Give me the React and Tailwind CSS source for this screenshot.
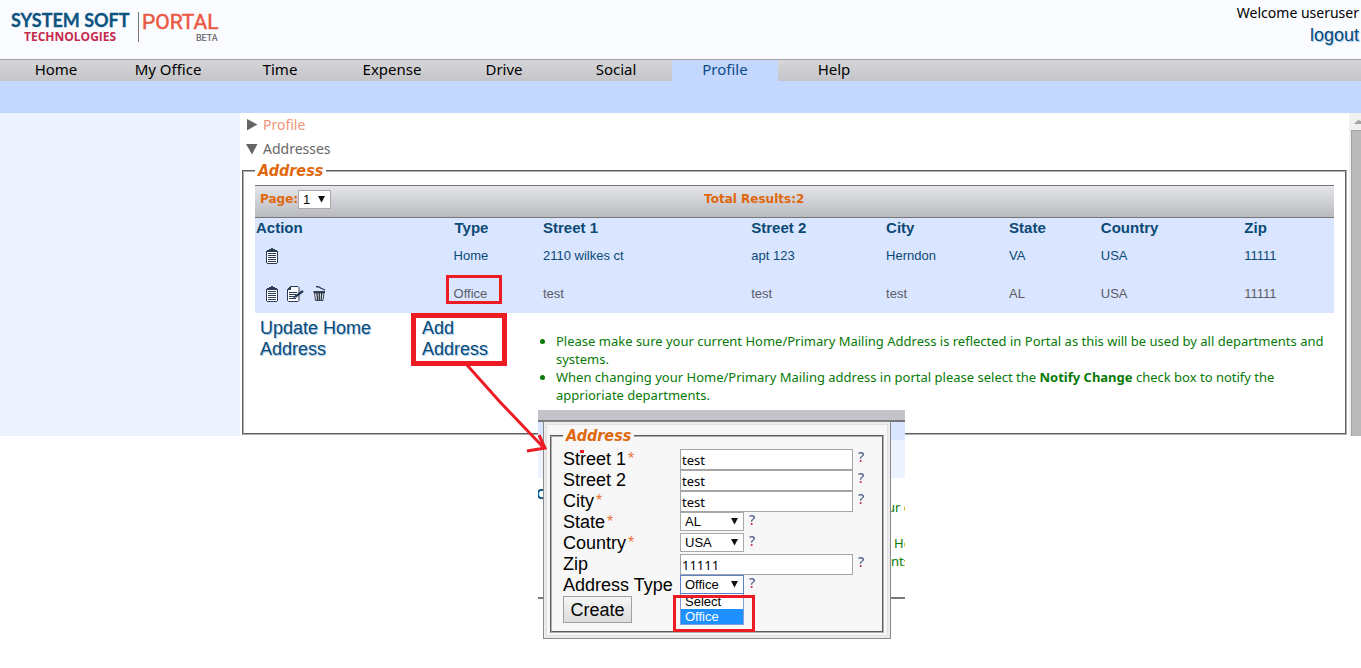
import React from "react";

const navItems = ["Home", "My Office", "Time", "Expense", "Drive", "Social", "Profile", "Help"];

const rows = [
  { type: "Home", street1: "2110 wilkes ct", street2: "apt 123", city: "Herndon", state: "VA", editable: false },
  { type: "Office", street1: "test", street2: "test", city: "test", state: "AL", editable: true },
];

function Logo() {
  return (
    <svg width="222" height="48" viewBox="0 0 222 48" role="img" aria-label="System Soft Technologies Portal Beta">
      <text x="11" y="27" fontSize="18" fontWeight="700" fill="#0b5380" stroke="#0b5380" strokeWidth="0.3" className="font-[Lato]">SYSTEM SOFT</text>
      <text x="24" y="41" fontSize="12" fontWeight="700" fill="#c62a4c" className="font-['Open_Sans']">TECHNOLOGIES</text>
      <rect x="138" y="12" width="1" height="30" fill="#777" />
      <text x="142" y="29" fontSize="21" fill="#ea5743" stroke="#ea5743" strokeWidth="0.5" className="font-[Roboto]">PORTAL</text>
      <text x="196" y="41" fontSize="9" fill="#666" stroke="#666" strokeWidth="0.2" className="font-[Roboto]">BETA</text>
    </svg>
  );
}

function ClipboardIcon() {
  return (
    <svg width="12" height="16" viewBox="0 0 12 16" shapeRendering="crispEdges">
      <path d="M1 2h10v1h1v12h-1v1H1v-1H0V3h1z" fill="#2b3a55" />
      <path d="M1 4h10v11H1z" fill="#fff" />
      <path d="M5 0h2v1h2v1h1v2H2V2h1V1h2z" fill="#2b3a55" />
      <path d="M2 5h8v1H2zM2 7h8v1H2zM2 9h8v1H2zM2 11h8v1H2zM2 13h8v1H2z" fill="#2b3a55" />
    </svg>
  );
}

function EditIcon() {
  return (
    <svg width="17" height="16" viewBox="0 0 17 16">
      <path d="M3.5 .5h7.500l1 1v13l-1 1h-9.500l-1-1v-11z" fill="#fff" stroke="#2b3a55" />
      <path d="M0 4L4 0v4z" fill="#2b3a55" />
      <path d="M2 6.500h8M2 8.500h7M2 10.500h6M2 12.500h7" fill="none" stroke="#2b3a55" />
      <path d="M16 5L8.500 10.500" stroke="#2b3a55" strokeWidth="2.400" />
      <path d="M8.500 9l-2.500 3 3.500-.8z" fill="#2b3a55" />
    </svg>
  );
}

function TrashIcon() {
  return (
    <svg width="13" height="17" viewBox="0 0 13 17">
      <path d="M3 1.500l3.500.5 1 1L12 5" fill="none" stroke="#2b3a55" strokeWidth="1.300" />
      <path d="M.5 6h11.500v2H.5z" fill="#333c50" />
      <path d="M1.500 8h9.500l-1 7.500H2.500z" fill="#e9edf7" stroke="#39445c" />
      <path d="M4 8l.5 7M6.300 8v7M8.700 8l-.5 7" stroke="#2b3040" strokeWidth="1.300" />
    </svg>
  );
}

function Caret() {
  return (
    <svg width="7" height="7" viewBox="0 0 7 7" className="pointer-events-none absolute right-[6px] top-[6px]">
      <path d="M0 0h7L3.500 6.500z" fill="#111" />
    </svg>
  );
}

function Select({ id, options, width, focused }) {
  return (
    <span className={"relative block " + width}>
      <select
        id={id}
        className={
          "block h-[19px] w-full appearance-none border bg-white pl-1 font-['Liberation_Sans',sans-serif] text-[13px] leading-4 font-normal text-black outline-none " +
          (focused ? "border-[#5b82c9]" : "border-[#a9a9a9]")
        }
      >
        {options.map((o) => (
          <option key={o}>{o}</option>
        ))}
      </select>
      <Caret />
    </span>
  );
}

function Help() {
  return (
    <a href="#help" className="bg-linear-to-b from-[#54608a] from-65% to-[#c62a4c] to-70% bg-clip-text font-['Open_Sans',sans-serif] text-[14px] leading-4 font-semibold text-transparent">
      ?
    </a>
  );
}

function Field({ id, label, required, children }) {
  return (
    <div className="flex h-[21px] items-start">
      <label htmlFor={id} className="w-[117px] shrink-0 text-[18px] leading-[21px] whitespace-nowrap">
        {label}
        {required && <span className="ml-0.5 align-top text-base leading-5 text-[#e8743b]">*</span>}
      </label>
      <div className="flex items-start gap-[5px]">
        {children}
        <Help />
      </div>
    </div>
  );
}

function TextBox({ id, value }) {
  return (
    <input
      id={id}
      type="text"
      defaultValue={value}
      className="h-[21px] w-[173px] border border-[#a5a5a5] bg-white px-px font-['Noto_Sans',sans-serif] text-[13px] leading-4 outline-none"
    />
  );
}

function AddressLegend() {
  return (
    <legend className="px-[3px] font-['DejaVu_Sans_Condensed','Noto_Sans',sans-serif] text-base leading-5 font-bold text-[#e0670c] italic">
      Address
    </legend>
  );
}

function AddressDialog() {
  return (
    <form className="w-[348px] border border-[#8a8a8a] bg-[#ececec] p-[2px] font-['Liberation_Sans',sans-serif] text-black">
      <div className="border border-[#e0e0e0] bg-[#f7f7f7] px-[3px] pt-px pb-[2px]">
        <fieldset className="border-2 border-[#b0b0b0] px-[11px] pb-2 [border-style:groove]">
          <AddressLegend />
          <div className="pt-[3px]">
            <Field id="street1" label="Street 1" required><TextBox id="street1" value="test" /></Field>
            <Field id="street2" label="Street 2"><TextBox id="street2" value="test" /></Field>
            <Field id="city" label="City" required><TextBox id="city" value="test" /></Field>
            <Field id="state" label="State" required><Select id="state" options={["AL"]} width="w-16" /></Field>
            <Field id="country" label="Country" required><Select id="country" options={["USA"]} width="w-16" /></Field>
            <Field id="zip" label="Zip"><TextBox id="zip" value="11111" /></Field>
            <Field id="addressType" label="Address Type">
              <div className="relative">
                <Select id="addressType" options={["Office", "Select"]} width="w-16" focused />
                <ul className="absolute top-[19px] left-0 w-16 border border-t-0 border-[#7f9fd6] bg-white text-[13px] leading-[15px]">
                  <li className="pl-1">Select</li>
                  <li className="bg-[#1e90ff] pl-1 text-white">Office</li>
                </ul>
                <span className="absolute top-[20px] -left-[7px] h-[37px] w-[82px] border-[3px] border-[#ed1c24]" />
              </div>
            </Field>
            <button type="button" className="block h-[27px] w-[69px] border border-[#a0a0a0] bg-linear-to-b from-[#f6f6f6] to-[#dcdcdc] text-[18px] leading-6">
              Create
            </button>
          </div>
        </fieldset>
      </div>
    </form>
  );
}

/* Strip of the page that shows around the edges of the dialog. */
function DialogBackdrop() {
  return (
    <div className="relative h-[190px] w-[367px] overflow-hidden bg-white font-['Noto_Sans',sans-serif] text-[13px] whitespace-nowrap text-[#077a07]">
      <div className="h-3 border-b-2 border-[#777] bg-[#c3c4c9]" />
      <div className="h-[18px] bg-[#dae5ff]" />
      <div className="h-[38px] bg-[#edf2ff]" />
      <div className="h-[121px] border-b-2 border-[#777]" />
      <span className="absolute top-[76px] -left-[2px] font-['Liberation_Sans',sans-serif] text-[15px] leading-4 font-bold text-[#0b5380]">C</span>
      <span className="absolute top-[88px] left-[349px] leading-[18px]">ur c</span>
      <span className="absolute top-[124px] left-[356px] leading-[18px]">He</span>
      <span className="absolute top-[142px] left-[353px] leading-[18px]">nts</span>
    </div>
  );
}

const linkStyle =
  "font-['Liberation_Sans',sans-serif] text-[18px] leading-[21px] text-[#0b4a75] [text-shadow:1px_1px_1px_#9cc8ee]";

export default function App() {
  return (
    <div className="relative min-h-screen overflow-hidden bg-white font-['Noto_Sans',sans-serif] text-black">
      <header className="flex h-[59px] justify-between bg-[#fafbff]">
        <Logo />
        <div className="flex flex-col items-end pt-1 pr-[2px] text-sm">
          <span className="leading-[18px]">Welcome useruser</span>
          <a href="#logout" className={linkStyle + " mt-[3px]"}>
            logout
          </a>
        </div>
      </header>

      <nav className="flex h-[22px] border-t border-[#a3a3a6] bg-linear-to-b from-[#d6d6d9] to-[#c5c5c9] text-[15px] leading-[18px]">
        {navItems.map((item) => (
          <a
            key={item}
            href={"#" + item}
            className={
              item === "Profile"
                ? "w-[106px] bg-[#c3d7ff] text-center text-[#0b4a8a]"
                : "w-28 text-center"
            }
          >
            {item}
          </a>
        ))}
      </nav>
      <div className="h-8 bg-[#c3d7ff]" />

      <div className="flex">
        <aside className="w-60 shrink-0 bg-[#edf2ff]" />
        <main className="min-w-0 grow px-[2px] pb-px">
          <button type="button" className="flex h-6 items-center gap-[5px] pl-[5px] text-sm text-[#f0957c]">
            <svg width="11" height="12" viewBox="0 0 11 12"><path d="M0 0v11.500L10.500 5.500z" fill="#666" /></svg>
            Profile
          </button>
          <button type="button" className="flex h-6 items-center gap-[5px] pl-1 text-sm text-[#666]">
            <svg width="12" height="11" viewBox="0 0 12 11"><path d="M0 0h11.500L6 10.500z" fill="#666" /></svg>
            Addresses
          </button>

          <fieldset className="h-[274px] border-2 border-[#b0b0b0] px-[11px] [border-style:groove]">
            <AddressLegend />
            <div className="pt-1">
              <div className="flex h-[33px] items-start border-y border-[#777] bg-linear-to-b from-[#e6e7eb] to-[#b9babf] pt-1 font-['DejaVu_Sans',sans-serif] text-xs font-bold text-[#e0670c]">
                <label htmlFor="page" className="pl-[5px] leading-[18px]">Page:</label>
                <Select id="page" options={["1"]} width="w-[33px]" />
                <span className="ml-[373px] leading-[18px]">Total Results:2</span>
              </div>

              <table className="w-full table-fixed border-collapse bg-[#dae5ff] text-left font-['Liberation_Sans',sans-serif] text-[13px] text-[#0b4a75]">
                <colgroup>
                  <col className="w-[18.4%]" />
                  <col className="w-[8.2%]" />
                  <col className="w-[19.3%]" />
                  <col className="w-[12.5%]" />
                  <col className="w-[11.4%]" />
                  <col className="w-[8.5%]" />
                  <col className="w-[13.3%]" />
                  <col className="w-[8.4%]" />
                </colgroup>
                <thead>
                  <tr className="h-[19px] text-[15px] leading-[19px]">
                    {["Action", "Type", "Street 1", "Street 2", "City", "State", "Country", "Zip"].map((h) => (
                      <th key={h} className="p-0 pl-px font-bold">{h}</th>
                    ))}
                  </tr>
                </thead>
                <tbody>
                  {rows.map((r) => (
                    <tr key={r.type} className={r.editable ? "h-[39px] text-[#5c5c66]" : "h-[37px]"}>
                      <td className="p-0 pl-[11px]">
                        <span className="flex items-center gap-[9px]">
                          <button type="button" aria-label="View"><ClipboardIcon /></button>
                          {r.editable && (
                            <>
                              <button type="button" aria-label="Edit"><EditIcon /></button>
                              <button type="button" aria-label="Delete"><TrashIcon /></button>
                            </>
                          )}
                        </span>
                      </td>
                      <td className="p-0">
                        <span className="relative">
                          {r.type}
                          {r.editable && (
                            <span className="absolute -top-[11px] -left-2 h-[29px] w-14 border-[3px] border-[#ed1c24]" />
                          )}
                        </span>
                      </td>
                      <td className="p-0 pl-px">{r.street1}</td>
                      <td className="p-0 pl-px">{r.street2}</td>
                      <td className="p-0 pl-px">{r.city}</td>
                      <td className="p-0 pl-px">{r.state}</td>
                      <td className="p-0 pl-px">USA</td>
                      <td className="p-0 pl-px">11111</td>
                    </tr>
                  ))}
                </tbody>
              </table>

              <div className="flex items-start">
                <a href="#update" className={"mt-[5px] ml-[5px] w-[151px] shrink-0 pr-8 " + linkStyle}>Update Home Address</a>
                <a href="#add" className={"h-[53px] w-24 shrink-0 border-[5px] border-[#ed1c24] pl-1.5 " + linkStyle}>Add Address</a>
                <ul className="mt-[19px] ml-[49px] list-disc text-[13px] leading-[18px] text-[#077a07]">
                  <li>
                    Please make sure your current Home/Primary Mailing Address is reflected in Portal as this will be used by all departments and systems.
                  </li>
                  <li>
                    When changing your Home/Primary Mailing address in portal please select the <b>Notify Change</b> check box to notify the apprioriate departments.
                  </li>
                </ul>
              </div>
            </div>
          </fieldset>
        </main>
        <div className="flex w-3 shrink-0 flex-col bg-[#f1f1f1]">
          <svg width="12" height="17" viewBox="0 0 12 17"><path d="M5 11h7V8L9 7z" fill="#a3a3a3" /></svg>
          <div className="ml-[2px] grow border-t border-l border-[#a3a3a3] bg-[#bababa]" />
        </div>
      </div>

      <div className="absolute top-[410px] left-[538px]">
        <DialogBackdrop />
        <div className="absolute top-[11px] left-[5px]">
          <AddressDialog />
        </div>
      </div>
      <svg width="130" height="100" viewBox="0 0 130 100" className="pointer-events-none absolute top-[360px] left-[460px]">
        <path d="M7 5L40 42L84 88M67 91L85 88L79 75" fill="none" stroke="#ed1c24" strokeWidth="3" />
        <path d="M120 90h4v3h-4z" fill="#ed1c24" />
      </svg>
    </div>
  );
}
